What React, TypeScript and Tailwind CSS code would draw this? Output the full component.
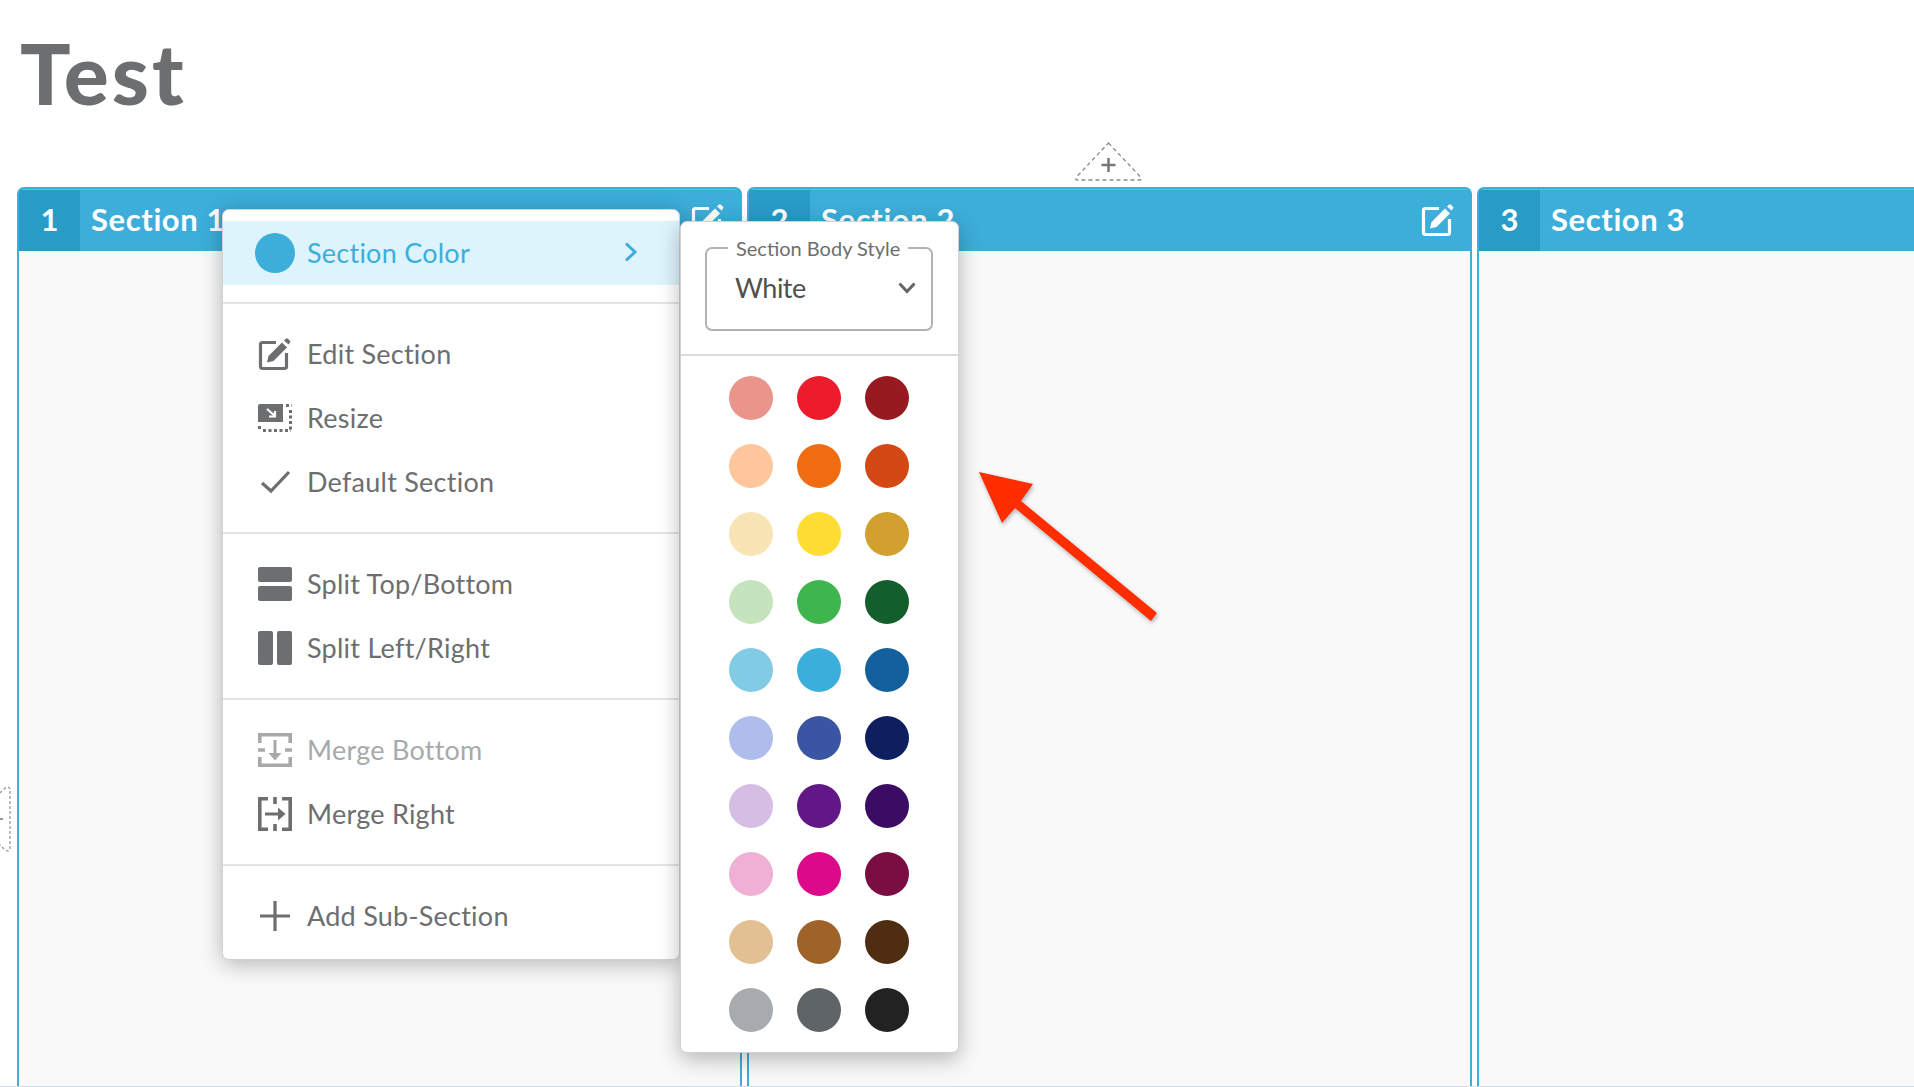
const swatches = [
  ["#e9958b", "#ec1c2d", "#981a21"],
  ["#fdc69c", "#ef6c11", "#d44814"],
  ["#f8e4b5", "#ffdd33", "#d2a02f"],
  ["#c5e3bd", "#3fb54e", "#125e2c"],
  ["#82cbe5", "#3caedb", "#13619c"],
  ["#aebdec", "#3a55a3", "#0d1f5f"],
  ["#d5bde3", "#621786", "#3b0c64"],
  ["#eeb0d3", "#dc0a8b", "#7a0d42"],
  ["#e3bf94", "#9f632a", "#4f2d10"],
  ["#a7abaf", "#5f6468", "#222222"],
];

function EditIcon({ className }: { className?: string }) {
  return (
    <svg viewBox="0 0 34 34" className={className} fill="none">
      <path d="M18 5.500H4.500a2 2 0 0 0-2 2v22a2 2 0 0 0 2 2h22a2 2 0 0 0 2-2V16" stroke="currentColor" strokeWidth="3.200" />
      <path d="M9 25.500l1.500-6.500L24 5.500 29 10.500 15.500 24z" fill="currentColor" />
      <path d="M26 3.500l1.800-1.800a1.500 1.500 0 0 1 2.100 0l2 2a1.500 1.500 0 0 1 0 2.100L30.500 7.500z" fill="currentColor" />
    </svg>
  );
}

function ResizeIcon() {
  return (
    <svg viewBox="0 0 34 28" className="w-[34px] h-[28px]" fill="none">
      <path d="M2 0h23v18H0V2a2 2 0 0 1 2-2z" fill="currentColor" />
      <path d="M9 5l8 7M17 7v5.500h-6" stroke="#fff" strokeWidth="2.200" />
      <path d="M28 1.500H34M32.500 6v20M1.500 22v5M5 26.500h28" stroke="currentColor" strokeWidth="3" strokeDasharray="3 2.500" />
    </svg>
  );
}

function CheckIcon() {
  return (
    <svg viewBox="0 0 34 34" className="w-[34px] h-[34px]" fill="none">
      <path d="M4 18l9 8L31 7" stroke="currentColor" strokeWidth="3.200" />
    </svg>
  );
}

function SplitTopIcon() {
  return (
    <svg viewBox="0 0 34 34" className="w-[34px] h-[34px]">
      <rect x="0" y="0" width="34" height="15" rx="2" fill="currentColor" />
      <rect x="0" y="19" width="34" height="15" rx="2" fill="currentColor" />
    </svg>
  );
}

function SplitLeftIcon() {
  return (
    <svg viewBox="0 0 34 34" className="w-[34px] h-[34px]">
      <rect x="0" y="0" width="15" height="34" rx="2" fill="currentColor" />
      <rect x="19" y="0" width="15" height="34" rx="2" fill="currentColor" />
    </svg>
  );
}

function MergeBottomIcon() {
  return (
    <svg viewBox="0 0 34 34" className="w-[34px] h-[34px]" fill="none" stroke="currentColor" strokeWidth="3.600">
      <path d="M1.800 10V1.800h30.400V10M1.800 24v8.200h30.400V24M0 17h7M27 17h7" />
      <path d="M17 7v16" strokeWidth="3" />
      <path d="M10.500 20h13L17 27.500z" fill="currentColor" stroke="none" />
    </svg>
  );
}

function MergeRightIcon() {
  return (
    <svg viewBox="0 0 34 34" className="w-[34px] h-[34px]" fill="none" stroke="currentColor" strokeWidth="3.600">
      <path d="M10 1.800H1.800v30.400H10M24 1.800h8.200v30.400H24M17 0v7M17 27v7" />
      <path d="M7 17h16" strokeWidth="3" />
      <path d="M20 10.500v13L27.500 17z" fill="currentColor" stroke="none" />
    </svg>
  );
}

function PlusIcon() {
  return (
    <svg viewBox="0 0 34 34" className="w-[34px] h-[34px]" fill="none">
      <path d="M17 2v30M2 17h30" stroke="currentColor" strokeWidth="3.200" />
    </svg>
  );
}

function MenuRow({ icon, label, muted }: { icon: React.ReactNode; label: string; muted?: boolean }) {
  return (
    <div className={`flex items-center h-[64px] pl-[35px] gap-[15px] ${muted ? "text-[#a7a9ab]" : "text-[#6d6e70]"}`}>
      {icon}
      <span>{label}</span>
    </div>
  );
}

function SectionColumn({ num, title, children }: { num: number; title: string; children?: React.ReactNode }) {
  return (
    <div className="relative w-[725px] shrink-0 flex flex-col">
      <div className="h-[64px] flex rounded-t-[7px] border-t-[2px] border-x-[2px] border-[#3caed9] bg-[#3caed9] text-white font-bold overflow-hidden">
        <div className="w-[61px] pb-[2px] bg-[#289bc6] border-t border-[#5bbde0] flex items-center justify-center text-[31px]">{num}</div>
        <div className="flex-1 pb-[2px] border-t border-[#5bbde0] flex items-center">
          <span className="pl-[11px] text-[31px] tracking-[0.6px]">{title}</span>
          <EditIcon className="ml-auto w-[34px] h-[34px] mr-[15px]" />
        </div>
      </div>
      <div className="flex-1 border-x-[2px] border-[#3caed9] bg-[#f9f9f9]" />
      {children}
    </div>
  );
}

export default function App() {
  return (
    <div className="h-[1087px] overflow-hidden flex flex-col bg-white border-b border-[#d5dde0] font-[Lato,sans-serif]">
      <h1 className="h-[187px] pl-[20px] pt-[23px] text-[84px] leading-[100px] font-black tracking-[3px] text-[#6d6e70]">Test</h1>

      <div className="flex-1 flex gap-[5px] pl-[17px]">
        <SectionColumn num={1} title="Section 1">
          {/* left drop target, cut off by the window */}
          <svg viewBox="0 0 12 68" className="absolute left-[-17px] top-[598px] w-[12px] h-[68px] text-[#9a9a9a]" fill="none">
            <path d="M0 8L5 3q4-2 5 1v60q-1 3-5 1L0 60" stroke="currentColor" strokeWidth="1.300" strokeDasharray="3 2" />
            <path d="M0 34h3" stroke="currentColor" strokeWidth="2" />
          </svg>

          <div className="absolute left-[205px] top-[22px] w-[458px] pt-[11px] bg-white border border-[#d2d2d2] rounded-[7px] shadow-[0_4px_22px_rgba(0,0,0,0.28)] text-[27px] tracking-[0.25px] z-10">
            <div className="flex items-center h-[64px] pl-[32px] pr-[41px] bg-[#ddf4fd] text-[#3caed9]">
              <div className="w-[40px] h-[40px] rounded-full bg-[#3caed9] mr-[12px]" />
              <span>Section Color</span>
              <svg viewBox="0 0 14 20" className="ml-auto w-[14px] h-[20px] -mt-[3px]" fill="none">
                <path d="M2 1.500l9 8.500-9 8.500" stroke="currentColor" strokeWidth="3" />
              </svg>
            </div>
            <div className="mt-[17px] py-[18px] border-t-[2px] border-[#e4e4e4]">
              <MenuRow icon={<EditIcon className="w-[34px] h-[34px]" />} label="Edit Section" />
              <MenuRow icon={<ResizeIcon />} label="Resize" />
              <MenuRow icon={<CheckIcon />} label="Default Section" />
            </div>
            <div className="py-[18px] border-t-[2px] border-[#e4e4e4]">
              <MenuRow icon={<SplitTopIcon />} label="Split Top/Bottom" />
              <MenuRow icon={<SplitLeftIcon />} label="Split Left/Right" />
            </div>
            <div className="py-[18px] border-t-[2px] border-[#e4e4e4]">
              <MenuRow icon={<MergeBottomIcon />} label="Merge Bottom" muted />
              <MenuRow icon={<MergeRightIcon />} label="Merge Right" />
            </div>
            <div className="pt-[18px] pb-[11px] border-t-[2px] border-[#e4e4e4]">
              <MenuRow icon={<PlusIcon />} label="Add Sub-Section" />
            </div>

            <div className="absolute left-[457px] top-[11px] w-[279px] h-[832px] bg-white border border-[#d2d2d2] rounded-[7px] shadow-[0_6px_22px_rgba(0,0,0,0.28)] tracking-normal">
              <div className="h-[134px] pl-[24px] pr-[25px] pt-[14px] border-b-[2px] border-[#dadada]">
                <fieldset className="h-[95px] border-[2px] border-[#b3b3b3] rounded-[7px] pl-[28px] pr-[15px]">
                  <legend className="px-[8px] -ml-[7px] text-[20px] leading-[24px] text-[#6d6e70]">Section Body Style</legend>
                  <div className="flex items-center justify-between h-[56px] text-[27px] tracking-[-0.5px] text-[#505050]">
                    <span>White</span>
                    <svg viewBox="0 0 18 12" className="w-[18px] h-[12px]" fill="none">
                      <path d="M1.500 1.500L9 9.500l7.500-8" stroke="#666" strokeWidth="3" />
                    </svg>
                  </div>
                </fieldset>
              </div>
              <div className="pt-[20px] pr-[2px] flex flex-col gap-[24px] items-center">
                {swatches.map((row) => (
                  <div key={row[0]} className="flex gap-[24px]">
                    {row.map((c) => (
                      <div key={c} className="w-[44px] h-[44px] rounded-full" style={{ backgroundColor: c }} />
                    ))}
                  </div>
                ))}
              </div>
            </div>
          </div>
        </SectionColumn>

        <SectionColumn num={2} title="Section 2">
          {/* add section target above the column */}
          <div className="absolute left-[328px] top-[-45px] w-[67px] h-[39px] text-[#8a8a8a]">
            <svg viewBox="0 0 67 39" className="w-full h-full" fill="none">
              <path d="M33.500 1L65.500 35q2 3-1 3H2.500q-3 0-1-3z" stroke="currentColor" strokeWidth="1.300" strokeDasharray="4 3" />
              <path d="M33.500 16v14M26.500 23h14" stroke="#777" strokeWidth="2.500" />
            </svg>
          </div>
        </SectionColumn>

        <SectionColumn num={3} title="Section 3" />
      </div>

      {/* callout arrow pasted over the shot */}
      <svg viewBox="0 0 1914 1087" className="absolute left-0 top-0 w-[1914px] h-[1087px] z-20 pointer-events-none drop-shadow-[1px_2px_2px_rgba(0,0,0,0.3)]">
        <path d="M979 472L1033 484L1021 501L1157 613L1151 621L1015 508L1002 523Z" fill="#ff2d00" />
      </svg>
    </div>
  );
}
